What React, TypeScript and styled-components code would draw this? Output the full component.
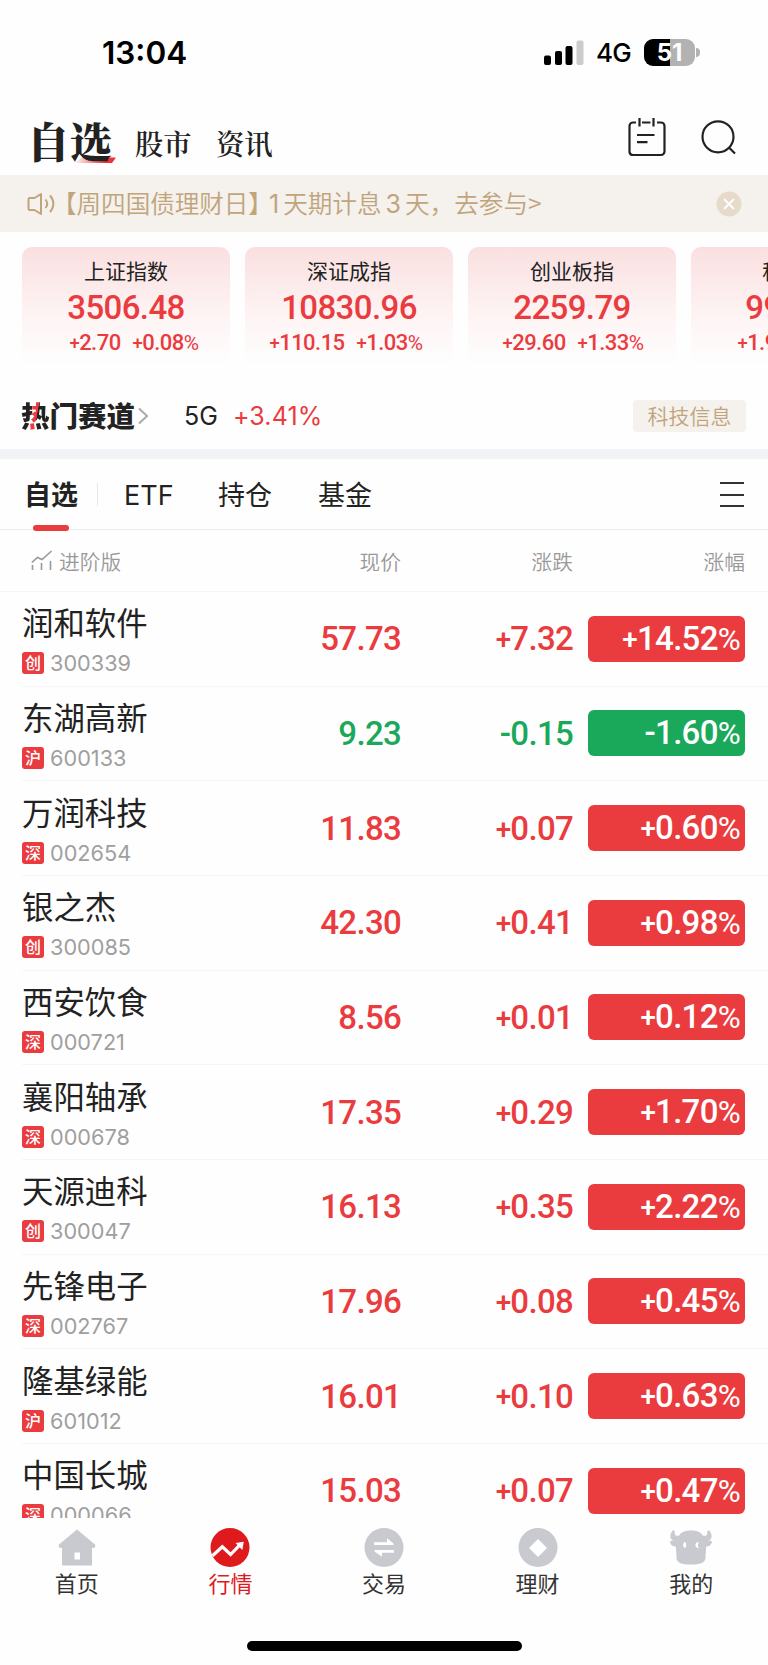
import React from 'react';
import styled, { createGlobalStyle } from 'styled-components';

const RED = '#ea3b3f';
const GREEN = '#1aa85b';
const INK = '#222222';
const GOLD = '#c0a47b';
const CJK = "'Noto Sans CJK SC', sans-serif";

const Global = createGlobalStyle`
  * { box-sizing: border-box; }
  body { margin: 0; background: #fff; }
`;

const Screen = styled.div`
  width: 768px;
  height: 1665px;
  overflow: hidden;
  display: flex;
  flex-direction: column;
  background: #fefefe;
  color: ${INK};
  font-family: Inter, ${CJK};
  white-space: nowrap;
`;

const StatusBar = styled.div`
  height: 105px;
  flex: none;
  display: flex;
  align-items: center;
  padding: 0 68px 0 102px;
  color: #000;
`;

const Clock = styled.div`
  font-size: 31.5px;
  font-weight: 600;
  line-height: 40px;
  margin-right: auto;
`;

const Network = styled.div`
  font-size: 26px;
  font-weight: 500;
  letter-spacing: -0.7px;
  line-height: 32px;
  margin: 1px 13px 0 12px;
`;

const Battery = styled.div`
  width: 51px;
  height: 27px;
  border-radius: 9px;
  background: linear-gradient(90deg, #000 26px, #b2b2b2 26px);
  color: #fff;
  font-size: 24px;
  font-weight: 700;
  line-height: 27px;
  text-align: center;
  margin-top: -1px;
`;

const Nub = styled.div`
  width: 4px;
  height: 9px;
  margin-left: 1px;
  border-radius: 0 4px 4px 0;
  background: #b2b2b2;
`;

const TopBar = styled.header`
  height: 70px;
  flex: none;
  display: flex;
  align-items: flex-start;
  padding: 0 31px 0 27px;
  font-family: 'Noto Serif CJK SC', 'Noto Serif SC', ${CJK};
`;

const TopTitle = styled.div`
  position: relative;
  width: 90px;
  margin: 5px 18px 0 0;
  font-size: 42.5px;
  font-weight: 900;
  line-height: 60px;
`;

const Swoosh = styled.svg`
  position: absolute;
  left: 47px;
  top: 47px;
`;

const TopLink = styled.div`
  width: 57px;
  margin: 12px 24px 0 0;
  font-size: 28.3px;
  font-weight: 600;
  line-height: 52px;
`;

const TopIcons = styled.div`
  display: flex;
  gap: 35px;
  margin: 12px 0 0 auto;
`;

const Notice = styled.div`
  height: 57px;
  flex: none;
  display: flex;
  align-items: center;
  padding: 0 26px 0 27px;
  background: #f5f1ed;
  color: ${GOLD};
  font-size: 24.6px;
  line-height: 36px;
`;

const NoticeText = styled.div`
  display: flex;
  align-items: baseline;
  margin: -2px auto 0 -3px;
  font-family: ${CJK};
  font-weight: 350;
`;

const NoticeLead = styled.span`
  width: 217px;
  letter-spacing: -0.05px;
`;

const NoticeDigit = styled.span<{ $before: number; $after: number }>`
  font-family: Inter, sans-serif;
  font-size: 25px;
  font-weight: 400;
  margin: 0 ${(p) => p.$after}px 0 ${(p) => p.$before}px;
`;

const Cards = styled.div`
  height: 149px;
  flex: none;
  display: flex;
  gap: 15px;
  padding: 15px 0 0 22px;
  overflow: hidden;
`;

const Card = styled.div`
  width: 208px;
  height: 119px;
  flex: none;
  border-radius: 10px;
  background: linear-gradient(180deg, #fadfe0 0%, #fef3f3 55%, #fefefe 100%);
  text-align: center;
  font-family: Roboto, ${CJK};
  color: ${RED};
`;

const CardName = styled.div`
  margin-top: 8px;
  font-size: 21px;
  line-height: 30px;
  color: ${INK};
  font-family: ${CJK};
`;

const CardPrice = styled.div`
  margin-top: 3px;
  font-size: 33px;
  font-weight: 500;
  line-height: 40px;
  letter-spacing: -0.6px;
`;

const CardMoves = styled.div<{ $shift: number }>`
  display: flex;
  justify-content: center;
  gap: 12px;
  margin-top: 1px;
  padding-left: ${(p) => Math.max(p.$shift, 0) * 2}px;
  padding-right: ${(p) => Math.max(-p.$shift, 0) * 2}px;
  font-size: 22px;
  font-weight: 500;
  letter-spacing: -0.55px;
  line-height: 28px;
`;

const HotRow = styled.div`
  height: 68px;
  flex: none;
  display: flex;
  align-items: center;
  padding: 2px 22px 0 21px;
`;

const HotTitle = styled.div`
  font-family: ${CJK};
  font-size: 28.5px;
  font-weight: 900;
  line-height: 36px;
  margin-top: -2px;
`;

const HotAccent = styled.span`
  background: linear-gradient(100deg, ${INK} 38%, ${RED} 39%, ${RED} 54%, ${INK} 55%);
  background-clip: text;
  color: transparent;
`;

const HotName = styled.div`
  margin: 0 15px 0 35px;
  font-size: 25px;
`;

const HotMove = styled.div`
  font-size: 25px;
  letter-spacing: 0.15px;
  color: ${RED};
  margin-right: auto;
`;

const HotTag = styled.div`
  width: 113px;
  height: 32px;
  border-radius: 4px;
  background: #f5f1ed;
  color: ${GOLD};
  font-family: ${CJK};
  font-size: 21px;
  font-weight: 350;
  line-height: 31px;
  text-align: center;
`;

const Band = styled.div`
  height: 10px;
  flex: none;
  background: #f1f3f6;
`;

const Tabs = styled.nav`
  height: 71px;
  flex: none;
  display: flex;
  align-items: center;
  padding: 1px 24px 0 24px;
  border-bottom: 1px solid #ebebed;
  font-size: 27px;
  line-height: 40px;
`;

const Tab = styled.div<{ $active?: boolean; $w: number }>`
  position: relative;
  top: 1px;
  width: ${(p) => p.$w}px;
  font-weight: ${(p) => (p.$active ? 700 : 400)};
  ${(p) =>
    p.$active &&
    `&::after {
      content: '';
      position: absolute;
      left: 9px;
      top: 49px;
      width: 36px;
      height: 6px;
      border-radius: 3px;
      background: ${RED};
    }`}
`;

const TabDivider = styled.div`
  width: 1px;
  height: 23px;
  margin: 0 26px 0 19px;
  background: #e8e8ea;
`;

const Burger = styled.div`
  width: 24px;
  height: 25px;
  margin-left: auto;
  display: flex;
  flex-direction: column;
  justify-content: space-between;
`;

const BurgerLine = styled.div`
  height: 2px;
  background: #333;
`;

const gridColumns = '200px 179px 172px 172px';

const TableHead = styled.div`
  height: 62px;
  flex: none;
  display: grid;
  grid-template-columns: ${gridColumns};
  align-items: center;
  padding-left: 22px;
  border-bottom: 1px solid #f6f6f7;
  color: #999;
  font-family: ${CJK};
  font-size: 20.7px;
  font-weight: 350;
  line-height: 30px;
`;

const HeadLabel = styled.div`
  text-align: right;
`;

const Advanced = styled.div`
  display: flex;
  align-items: center;
  gap: 6px;
  padding-left: 9px;
`;

const List = styled.div`
  height: 926px;
  flex: none;
  overflow: hidden;
`;

const Row = styled.div`
  height: 94.67px;
  margin-left: 22px;
  display: grid;
  grid-template-columns: ${gridColumns};
  align-items: center;
  border-bottom: 1px solid #f6f6f7;
`;

const Name = styled.div`
  margin-top: 1px;
  font-family: ${CJK};
  font-size: 31.4px;
  line-height: 40px;
`;

const CodeLine = styled.div`
  display: flex;
  align-items: center;
  gap: 6px;
  height: 26px;
  margin-top: 8px;
  color: #9f9f9f;
  font-size: 21.7px;
  font-weight: 400;
  line-height: 26px;
`;

const Market = styled.div`
  width: 22px;
  height: 22px;
  border-radius: 3px;
  background: ${RED};
  color: #fff;
  font-family: ${CJK};
  font-size: 16px;
  font-weight: 500;
  line-height: 21px;
  text-align: center;
`;

const Figure = styled.div<{ $down?: boolean }>`
  font-family: Roboto, sans-serif;
  font-size: 33px;
  font-weight: 500;
  letter-spacing: -0.7px;
  text-align: right;
  color: ${(p) => (p.$down ? GREEN : RED)};
`;

const Pill = styled(Figure)`
  width: 157px;
  height: 46px;
  margin-left: 15px;
  padding-right: 5px;
  border-radius: 6px;
  line-height: 46px;
  color: #fff;
  background: ${(p) => (p.$down ? GREEN : RED)};
`;

const Small = styled.span<{ $pct?: boolean }>`
  font-size: ${(p) => (p.$pct ? '0.95em' : '0.84em')};
  font-weight: ${(p) => (p.$pct ? 400 : 500)};
  position: relative;
  top: ${(p) => (p.$pct ? '0' : '-0.04em')};
`;

const BottomNav = styled.nav`
  height: 123px;
  flex: none;
  display: flex;
`;

const NavItem = styled.div<{ $active?: boolean }>`
  flex: 1;
  display: flex;
  flex-direction: column;
  align-items: center;
  padding: 8px 0 0 0;
  font-family: ${CJK};
  font-size: 22px;
  line-height: 28px;
  color: ${(p) => (p.$active ? '#df1a1d' : '#333')};
`;

const HomeBar = styled.div`
  width: 275px;
  height: 10px;
  margin: 0 auto;
  border-radius: 5px;
  background: #000;
`;

const Signed = ({ text }: { text: string }) => (
  <>
    {text.split('').map((c, i) =>
      c === '+' || c === '%' ? (
        <Small key={i} $pct={c === '%'}>{c}</Small>
      ) : (
        c
      ),
    )}
  </>
);

const indices = [
  { name: '上证指数', price: '3506.48', diff: '+2.70', pct: '+0.08%', shift: 8 },
  { name: '深证成指', price: '10830.96', diff: '+110.15', pct: '+1.03%', shift: -3 },
  { name: '创业板指', price: '2259.79', diff: '+29.60', pct: '+1.33%', shift: 1 },
  { name: '科创50', price: '994.45', diff: '+1.90', pct: '+0.19%', shift: 7 },
];

const stocks = [
  ['润和软件', '创', '300339', '57.73', '+7.32', '+14.52%'],
  ['东湖高新', '沪', '600133', '9.23', '-0.15', '-1.60%'],
  ['万润科技', '深', '002654', '11.83', '+0.07', '+0.60%'],
  ['银之杰', '创', '300085', '42.30', '+0.41', '+0.98%'],
  ['西安饮食', '深', '000721', '8.56', '+0.01', '+0.12%'],
  ['襄阳轴承', '深', '000678', '17.35', '+0.29', '+1.70%'],
  ['天源迪科', '创', '300047', '16.13', '+0.35', '+2.22%'],
  ['先锋电子', '深', '002767', '17.96', '+0.08', '+0.45%'],
  ['隆基绿能', '沪', '601012', '16.01', '+0.10', '+0.63%'],
  ['中国长城', '深', '000066', '15.03', '+0.07', '+0.47%'],
];

const NAV_GREY = '#c9cad0';

const navItems = [
  {
    label: '首页',
    icon: (
      <>
        <path d="M22 3.5 40 18.5a2.6 2.6 0 0 1-1.5 3.5H37v17.5H7V22H5.500a2.600 2.600 0 0 1-1.500-3.500Z" fill={NAV_GREY} />
        <rect x="19.500" y="26.500" width="5.500" height="7" fill="#fff" />
      </>
    ),
  },
  {
    label: '行情',
    icon: (
      <>
        <circle cx="22" cy="21.500" r="19.500" fill="#df1a1d" />
        <path d="m4.500 29.800 9.800-9 8.300 7.700 8.800-9.200" fill="none" stroke="#fff" strokeWidth="3.200" />
        <path d="m27.500 17 8.300-1.300-1.500 8.200Z" fill="#fff" />
      </>
    ),
  },
  {
    label: '交易',
    icon: (
      <>
        <circle cx="22" cy="21.500" r="19.500" fill={NAV_GREY} />
        <path d="M12 16.300H25V12.200l6.500 5.300v1.500H12ZM32 24v2.700H20v4.100L12.500 25.500V24Z" fill="#fff" />
      </>
    ),
  },
  {
    label: '理财',
    icon: (
      <>
        <circle cx="22" cy="21.500" r="19.500" fill={NAV_GREY} />
        <path d="m22 13 9 9-9 9-9-9Z" fill="#fff" />
      </>
    ),
  },
  {
    label: '我的',
    icon: (
      <>
        <path
          d="M3.500 4.500c-4 6-2 10 2.500 10.500-3-.3-4.700-.2-5 1C2 19.500 4 20.500 6.800 20.500L7.500 30c-.8 7 5.500 8.500 14.500 8.500S37.300 37 36.500 30l.7-9.500c2.800 0 4.800-1 5.800-4.500-.3-1.200-2-1.300-5-1 4.500-.5 6.500-4.500 2.500-10.500-2-.3-2.500.6-2.300 2 .3 2.500-1 3.500-4.200 3.200C31.500 5.500 27 4.500 22 4.500S12.500 5.500 10 9.700C6.800 10 5.500 9 5.800 6.500c.2-1.400-.3-2.300-2.300-2Z"
          fill={NAV_GREY}
        />
        <ellipse cx="15.700" cy="19" rx="1.500" ry="2.900" fill="#fff" />
        <path d="M30 16.200a2.900 2.900 0 1 0 0 5.600c-1.500-1.500-1.500-4.100 0-5.600Z" fill="#fff" />
      </>
    ),
  },
];

export default function App() {
  return (
    <Screen>
      <Global />
      <StatusBar>
        <Clock>13:04</Clock>
        <svg width="40" height="26" viewBox="0 0 40 26">
          <rect x="0" y="15.500" width="7" height="9.500" rx="2" />
          <rect x="11" y="11" width="7" height="14" rx="2" />
          <rect x="21.500" y="6" width="7" height="19" rx="2" />
          <rect x="32.500" y="0.500" width="7" height="24.500" rx="2" fill="#ccc" />
        </svg>
        <Network>4G</Network>
        <Battery>51</Battery>
        <Nub />
      </StatusBar>

      <TopBar>
        <TopTitle>
          <Swoosh width="44" height="8" viewBox="0 0 44 8">
            <defs>
              <linearGradient id="swoosh">
                <stop offset="0" stopColor="#f03035" stopOpacity="0" />
                <stop offset="0.750" stopColor="#f03035" />
              </linearGradient>
            </defs>
            <path d="M0 6 38 6 42 0.500H8Z" fill="url(#swoosh)" />
          </Swoosh>
          <TitleText>自选</TitleText>
        </TopTitle>
        <TopLink>股市</TopLink>
        <TopLink>资讯</TopLink>
        <TopIcons>
          <svg width="38" height="40" viewBox="0 0 38 40" fill="none" stroke="#222" strokeWidth="2.200">
            <path d="M8 5.500H5a3.500 3.500 0 0 0-3.500 3.500v26A3.500 3.500 0 0 0 5 38h28a3.500 3.500 0 0 0 3.500-3.500V9A3.500 3.500 0 0 0 33 5.500h-4M14 5.500h8.500M11.500 1v8.500M25.500 1v8.500M9 18h17.500M9 25.200h10.500" />
          </svg>
          <svg width="36" height="40" viewBox="0 0 36 40" fill="none" stroke="#222" strokeWidth="2.200">
            <circle cx="17" cy="19.800" r="15.500" />
            <path d="m28 30.500 6 6" />
          </svg>
        </TopIcons>
      </TopBar>

      <Notice>
        <svg width="28" height="26" viewBox="0 0 28 26" fill="none" stroke={GOLD} strokeWidth="2" strokeLinejoin="round">
          <path d="M14 3v20L7.500 19H3a1.500 1.500 0 0 1-1.500-1.500v-9A1.500 1.500 0 0 1 3 7h4.500ZM18.500 8.500c2 2.500 2 6 0 8.500M23 4.500c4.500 5 4.500 11.500 0 16.500" />
        </svg>
        <NoticeText>
          <NoticeLead>【周四国债理财日】</NoticeLead>
          <NoticeDigit $before={0} $after={4}>1</NoticeDigit>
          天期计息
          <NoticeDigit $before={4} $after={4}>3</NoticeDigit>
          天，去参与&gt;
        </NoticeText>
        <svg width="26" height="26" viewBox="0 0 26 26">
          <circle cx="13" cy="13" r="12.500" fill="#e6dacb" />
          <path d="m8 8 10 10M18 8 8 18" stroke="#fff" strokeWidth="1.800" />
        </svg>
      </Notice>

      <Cards>
        {indices.map(({ name, price, diff, pct, shift }) => (
          <Card key={name}>
            <CardName>{name}</CardName>
            <CardPrice>{price}</CardPrice>
            <CardMoves $shift={shift}>
              <span><Signed text={diff} /></span>
              <span><Signed text={pct} /></span>
            </CardMoves>
          </Card>
        ))}
      </Cards>

      <HotRow>
        <HotTitle><HotAccent>热</HotAccent>门赛道</HotTitle>
        <svg width="14" height="20" viewBox="0 0 14 20" fill="none" stroke="#aaa" strokeWidth="2">
          <path d="m4 2.500 8 7.500-8 7.500" />
        </svg>
        <HotName>5G</HotName>
        <HotMove>+3.41%</HotMove>
        <HotTag>科技信息</HotTag>
      </HotRow>
      <Band />

      <Tabs>
        <Tab $active $w={54}>自选</Tab>
        <TabDivider />
        <Tab $w={94}>ETF</Tab>
        <Tab $w={100}>持仓</Tab>
        <Tab $w={60}>基金</Tab>
        <Burger><BurgerLine /><BurgerLine /><BurgerLine /></Burger>
      </Tabs>

      <TableHead>
        <Advanced>
          <svg width="22" height="21" viewBox="0 0 22 21" fill="none" stroke="#999" strokeWidth="1.600">
            <path d="M.8 12.500 6.500 7.500l4.500 2L20.500 1M1.500 15v5M10.500 13v7M19.500 11v9" />
          </svg>
          进阶版
        </Advanced>
        <HeadLabel>现价</HeadLabel>
        <HeadLabel>涨跌</HeadLabel>
        <HeadLabel>涨幅</HeadLabel>
      </TableHead>

      <List>
        {stocks.map(([name, market, code, price, diff, pct]) => {
          const down = diff.startsWith('-');
          return (
            <Row key={code}>
              <div>
                <Name>{name}</Name>
                <CodeLine><Market>{market}</Market>{code}</CodeLine>
              </div>
              <Figure $down={down}>{price}</Figure>
              <Figure $down={down}><Signed text={diff} /></Figure>
              <Pill $down={down}><Signed text={pct} /></Pill>
            </Row>
          );
        })}
      </List>

      <BottomNav>
        {navItems.map(({ label, icon }) => (
          <NavItem key={label} $active={label === '行情'}>
            <svg width="44" height="42" viewBox="0 0 44 42">{icon}</svg>
            {label}
          </NavItem>
        ))}
      </BottomNav>
      <HomeBar />
    </Screen>
  );
}

const TitleText = styled.span`
  position: relative;
`;
